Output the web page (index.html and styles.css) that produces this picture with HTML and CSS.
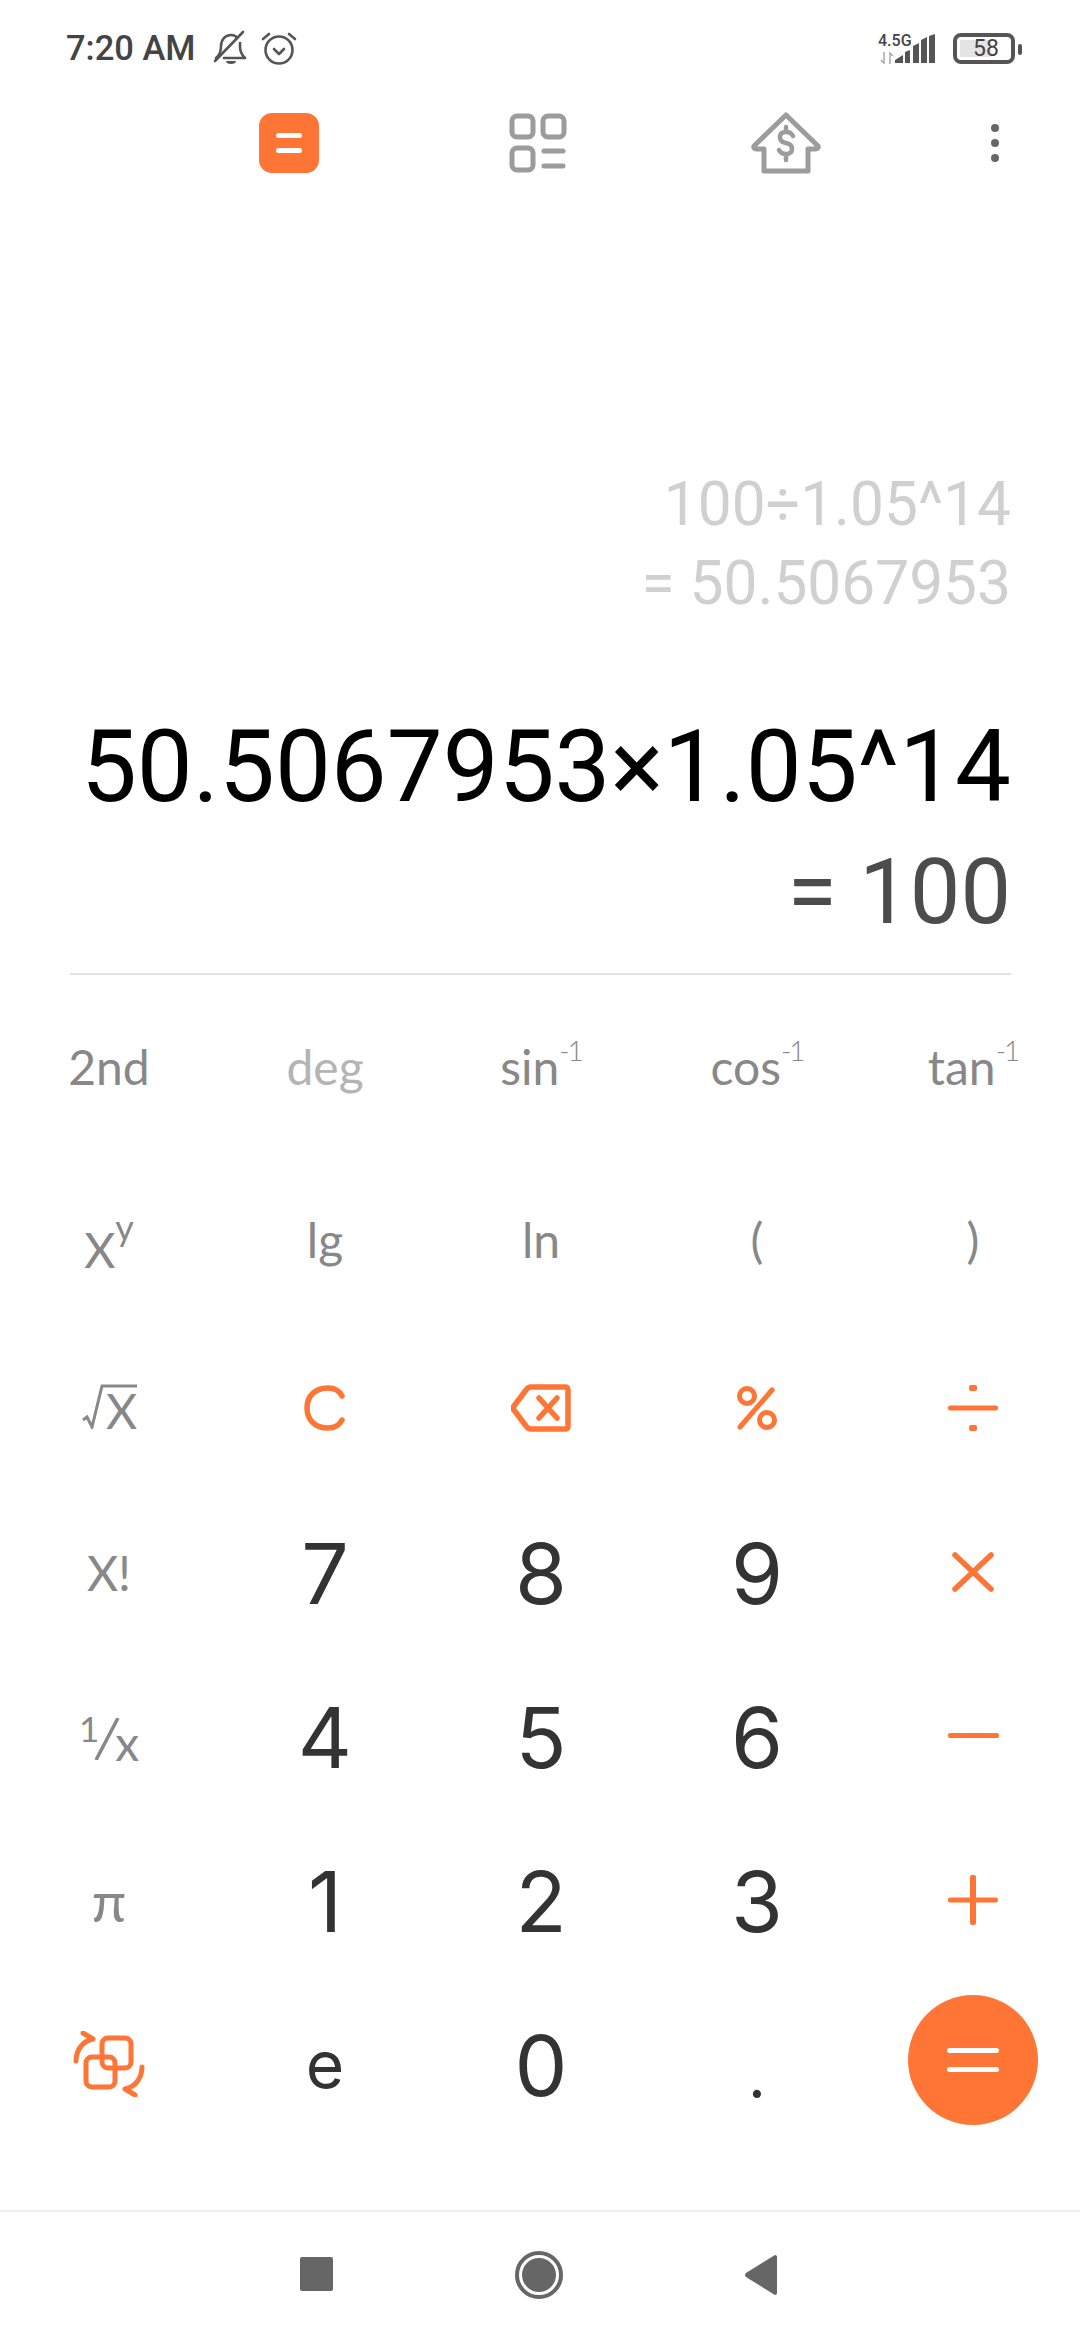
FILE: index.html
```html
<!DOCTYPE html>
<html lang="en">
<head>
  <meta charset="UTF-8" />
  <meta name="viewport" content="width=device-width, initial-scale=1.0" />
  <title>Calculator</title>
  <link rel="stylesheet" href="styles.css">
</head>
<body>
  <div class="status">
    <div class="status-left">
      <span class="time">7:20 AM</span>
      <svg class="bell" width="36" height="36" viewBox="0 0 36 36" fill="none" stroke="#555" stroke-width="2.6" stroke-linecap="round" stroke-linejoin="round">
        <path d="M3 28c4-3 5-6 5-12 0-6 4-11 10-11 3 0 5 1 6 3M27 13v4c0 5 2 8 5 11H11"/>
        <path d="M2 31 L30 2"/>
        <path d="M13 31h10c0 2-2 3-5 3s-5-1-5-3z" fill="#555" stroke="none"/>
      </svg>
      <svg class="alarm" width="36" height="36" viewBox="0 0 36 36" fill="none" stroke="#555" stroke-width="2.6" stroke-linecap="round" stroke-linejoin="round">
        <circle cx="18" cy="20" r="13.500"/>
        <path d="M13 19l5 5 5-5M2 9l6-5M34 9l-6-5"/>
      </svg>
    </div>
    <div class="status-right">
      <div class="net">
        <span class="net-label">4.5G</span>
        <svg class="arrows" width="14" height="12" viewBox="0 0 14 12" fill="none" stroke="#aaa" stroke-width="1.500">
          <path d="M4 0v11L1 8M10 12V1l3 3"/>
        </svg>
      </div>
      <svg class="signal" width="42" height="30" viewBox="0 0 42 30" fill="#555">
        <path d="M0 29v-3l8-5v8zM10 29V18l5-2v13zM18 29V12l6-3v20zM26 29V6l6-3v26zM34 29V2l6-2v29z"/>
      </svg>
      <div class="battery"><span class="level"></span><span class="pct">58</span></div>
      <span class="nub"></span>
    </div>
  </div>

  <div class="tabs">
    <div class="tab-calc"><span></span><span></span></div>
    <svg class="tab-grid" width="58" height="60" viewBox="0 0 58 60" fill="none" stroke="#9c9c9c" stroke-width="5" stroke-linecap="round">
      <rect x="3" y="3" width="21" height="21" rx="5"/>
      <rect x="34" y="3" width="21" height="21" rx="5"/>
      <rect x="3" y="35" width="21" height="22" rx="5"/>
      <path d="M35 38h19M35 53h19"/>
    </svg>
    <svg class="tab-home" width="70" height="62" viewBox="0 0 70 62" fill="none" stroke="#9c9c9c" stroke-width="5" stroke-linecap="round" stroke-linejoin="round">
      <path d="M35 3L3 34q-1 2 2 3h8v22h44V37h8q3-1 2-3z"/>
      <path d="M42 24q-2-4-7-4-6 0-6 5 0 5 6 6t6 6q0 5-6 5-5 0-7-4M35 15v5M35 43v5" stroke-width="4.500"/>
    </svg>
    <div class="tab-more"><span></span><span></span><span></span></div>
  </div>

  <div class="display">
    <div class="history">100÷1.05^14</div>
    <div class="history">= 50.5067953</div>
    <div class="expr">50.5067953×1.05^14</div>
    <div class="result">= 100</div>
  </div>

  <div class="keypad">
    <div class="key sci">2nd</div>
    <div class="key sci faint">deg</div>
    <div class="key sci"><span>sin<sup>-1</sup></span></div>
    <div class="key sci"><span>cos<sup>-1</sup></span></div>
    <div class="key sci"><span>tan<sup>-1</sup></span></div>

    <div class="key sci big"><span>X<sup>y</sup></span></div>
    <div class="key sci lift">lg</div>
    <div class="key sci lift">ln</div>
    <div class="key sci lift">(</div>
    <div class="key sci lift">)</div>

    <div class="key sci">
      <svg class="root" width="56" height="45" viewBox="0 0 56 45" fill="none" stroke="#888" stroke-width="3">
        <path d="M1 36l4-3 5 10L20 2h35"/>
      </svg>
      <span class="root-x">X</span>
    </div>
    <div class="key">
      <svg width="42" height="46" viewBox="0 0 42 46" fill="none" stroke="#ff7536" stroke-width="5.500" stroke-linecap="round">
        <path d="M38 11C35 5 30 3 24 3 11 3 3 11 3 23s8 20 21 20c6 0 11-2 14-8"/>
      </svg>
    </div>
    <div class="key">
      <svg width="60" height="48" viewBox="0 0 60 48" fill="none" stroke="#ff7536" stroke-width="5.500" stroke-linecap="round" stroke-linejoin="round">
        <path d="M20 3h34q3 0 3 3v36q0 3-3 3H20q-3 0-5-3L3 26q-2-2 0-4L15 6q2-3 5-3z"/>
        <path d="M28 14l18 20M46 14L28 34"/>
      </svg>
    </div>
    <div class="key">
      <svg width="44" height="46" viewBox="0 0 44 46" fill="none" stroke="#ff7536" stroke-width="5" stroke-linecap="round">
        <circle cx="12" cy="11" r="7.500"/>
        <circle cx="32" cy="35" r="7.500"/>
        <path d="M5 42L37 5"/>
      </svg>
    </div>
    <div class="key">
      <svg width="52" height="46" viewBox="0 0 52 46" fill="#ff7536">
        <rect x="1" y="20.500" width="50" height="5" rx="2"/>
        <rect x="22" y="0" width="8" height="6" rx="2"/>
        <rect x="22" y="40" width="8" height="6" rx="2"/>
      </svg>
    </div>

    <div class="key sci">X!</div>
    <div class="key num">7</div>
    <div class="key num">8</div>
    <div class="key num">9</div>
    <div class="key">
      <svg width="42" height="40" viewBox="0 0 42 40" fill="none" stroke="#ff7536" stroke-width="5.500" stroke-linecap="round">
        <path d="M3 3l36 34M39 3L3 37"/>
      </svg>
    </div>

    <div class="key sci">
      <div class="frac">
        <span class="frac-one">1</span>
        <svg width="28" height="42" viewBox="0 0 28 42" fill="none" stroke="#888" stroke-width="3.500">
          <path d="M25 0L3 42"/>
        </svg>
        <span class="frac-x">x</span>
      </div>
    </div>
    <div class="key num">4</div>
    <div class="key num">5</div>
    <div class="key num">6</div>
    <div class="key"><span class="bar"></span></div>

    <div class="key sci pi">π</div>
    <div class="key num">1</div>
    <div class="key num">2</div>
    <div class="key num">3</div>
    <div class="key">
      <svg width="52" height="52" viewBox="0 0 52 52" fill="#ff7536">
        <rect x="1" y="23.500" width="50" height="5" rx="2"/>
        <rect x="23" y="1" width="6" height="50" rx="2"/>
      </svg>
    </div>

    <div class="key">
      <svg width="72" height="66" viewBox="0 0 72 66" fill="none" stroke="#ff7536" stroke-width="5" stroke-linecap="round" stroke-linejoin="round">
        <rect x="29" y="7" width="29" height="30" rx="6"/>
        <rect x="13" y="26" width="29" height="30" rx="6"/>
        <path d="M3 30C3 20 9 10 20 8M10 2l10 6-4 1"/>
        <path d="M69 36c0 10-6 20-17 22M62 64l-10-6 4-1"/>
      </svg>
    </div>
    <div class="key num small-e">e</div>
    <div class="key num">0</div>
    <div class="key num dot">.</div>
    <div class="key">
      <div class="equals"><span></span><span></span></div>
    </div>
  </div>

  <div class="navbar">
    <span class="nav-square"></span>
    <span class="nav-circle"><span></span></span>
    <svg width="32" height="40" viewBox="0 0 32 40" fill="#666">
      <path d="M30 0q2 0 2 2v36q0 2-2 2L1 22q-2-2 0-4z"/>
    </svg>
  </div>
</body>
</html>
```

FILE: styles.css
```css
body {
  margin: 0;
  width: 1080px;
  height: 2340px;
  background-color: #fff;
  font-family: Roboto, sans-serif;
  overflow: hidden;
}

/* status bar */
.status {
  height: 96px;
  box-sizing: border-box;
  padding: 28px 58px 0 66px;
  display: flex;
  justify-content: space-between;
  align-items: flex-start;
}
.status-left {
  display: flex;
  align-items: center;
  gap: 16px;
  height: 40px;
}
.time {
  font-size: 34.5px;
  font-weight: 500;
  color: #444;
  margin-right: 1px;
}
.alarm {
  margin-left: -4px;
}
.status-right {
  display: flex;
  align-items: flex-end;
  height: 36px;
}
.net {
  width: 36px;
  display: flex;
  flex-direction: column;
  align-items: flex-start;
  margin-right: -19px;
}
.net-label {
  font-size: 16px;
  font-weight: 500;
  line-height: 17px;
  color: #444;
}
.arrows {
  margin: 3px 0 0 2px;
}
.signal {
  margin-right: 16px;
}
.battery {
  position: relative;
  width: 62px;
  height: 31px;
  box-sizing: border-box;
  border: 4px solid #555;
  border-radius: 8px;
  display: flex;
  align-items: center;
  justify-content: center;
}
.level {
  position: absolute;
  left: 3px;
  top: 3px;
  bottom: 3px;
  width: 57%;
  background-color: #e4e4e4;
}
.pct {
  position: relative;
  font-size: 23px;
  color: #444;
  margin-left: 4px;
}
.nub {
  width: 4px;
  height: 11px;
  background-color: #555;
  border-radius: 2px;
  margin: 0 0 9px 3px;
}

/* tabs */
.tabs {
  display: flex;
  align-items: center;
  height: 62px;
  margin-top: 16px;
  padding-left: 259px;
}
.tab-calc {
  width: 60px;
  height: 60px;
  background-color: #ff7536;
  border-radius: 13px;
  display: flex;
  flex-direction: column;
  align-items: center;
  justify-content: center;
  gap: 10px;
}
.tab-calc span {
  width: 26px;
  height: 5px;
  background-color: #fff;
  border-radius: 3px;
}
.tab-grid {
  margin-left: 190px;
}
.tab-home {
  margin-left: 184px;
}
.tab-more {
  margin-left: 170px;
  display: flex;
  flex-direction: column;
  gap: 7px;
}
.tab-more span {
  width: 8px;
  height: 8px;
  background-color: #666;
  border-radius: 50%;
}

/* display */
.display {
  margin: 0 69px 0 70px;
  height: 801px;
  box-sizing: border-box;
  border-bottom: 2px solid #e2e2e2;
  padding-top: 291px;
  text-align: right;
}
.history {
  font-size: 60.4px;
  line-height: 79px;
  color: #d0d0d0;
}
.expr {
  margin-top: 80px;
  font-size: 99.5px;
  line-height: 128px;
  color: #000;
  white-space: nowrap;
}
.result {
  font-size: 90px;
  line-height: 124px;
  color: #4c4c4c;
}

/* keypad */
.keypad {
  display: grid;
  padding-left: 1px;
  grid-template-columns: repeat(5, 216px);
  grid-template-rows: 183px 168px repeat(5, 164px);
}
.key {
  display: flex;
  align-items: center;
  justify-content: center;
  position: relative;
}
.sci {
  font-family: Lato, sans-serif;
  font-size: 48px;
  color: #888;
}
.sci sup {
  font-size: 28px;
  font-weight: 300;
  line-height: 0;
  letter-spacing: -2px;
  vertical-align: 24px;
}
.lift {
  padding-bottom: 6px;
  box-sizing: border-box;
}
.big {
  padding-top: 14px;
  box-sizing: border-box;
}
.big sup {
  font-size: 36px;
  font-weight: 400;
  letter-spacing: 0;
  vertical-align: 27px;
}
.faint {
  color: #b4b4b4;
}
.pi {
  font-size: 56px;
}
.root {
  margin-right: -32px;
  margin-top: -4px;
}
.root-x {
  width: 30px;
  margin-top: 4px;
}
.frac {
  display: flex;
  align-items: flex-end;
}
.frac-one {
  font-size: 35px;
  line-height: 30px;
  margin: 0 -6px 17px 0;
}
.frac-x {
  line-height: 34px;
  margin-left: -6px;
}
.num {
  font-family: Inter, sans-serif;
  font-size: 84px;
  color: #333;
  padding-top: 3px;
  box-sizing: border-box;
}
.small-e {
  font-size: 66px;
  padding-top: 0;
}
.dot {
  align-items: flex-end;
  padding-bottom: 33px;
  box-sizing: border-box;
  font-size: 62px;
}
.bar {
  width: 51px;
  height: 5px;
  margin-top: -2px;
  background-color: #ff7536;
  border-radius: 2px;
}
.equals {
  width: 130px;
  height: 130px;
  background-color: #ff7536;
  border-radius: 50%;
  display: flex;
  flex-direction: column;
  align-items: center;
  justify-content: center;
  gap: 14px;
  margin-top: -8px;
}
.equals span {
  width: 52px;
  height: 5px;
  background-color: #fff;
  border-radius: 3px;
}

/* nav bar */
.navbar {
  margin-top: 64px;
  height: 130px;
  box-sizing: border-box;
  border-top: 2px solid #eee;
  padding: 43px 303px 0 300px;
  display: flex;
  justify-content: space-between;
  align-items: flex-start;
}
.nav-square {
  width: 33px;
  height: 34px;
  margin-top: 2px;
  background-color: #666;
  border-radius: 2px;
}
.nav-circle {
  width: 40px;
  height: 40px;
  margin-top: -4px;
  border: 4px solid #666;
  border-radius: 50%;
  display: flex;
  align-items: center;
  justify-content: center;
}
.nav-circle span {
  width: 34px;
  height: 34px;
  flex: none;
  background-color: #666;
  border-radius: 50%;
}
```
